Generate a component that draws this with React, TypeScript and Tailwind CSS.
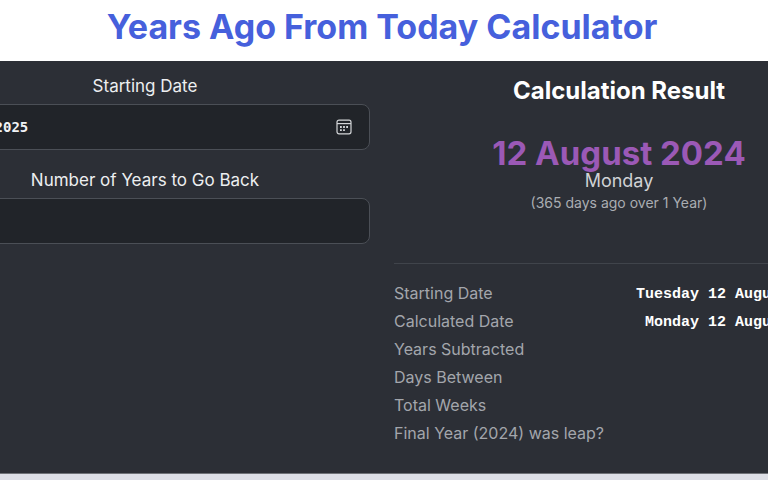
import { useState } from 'react';

type ResultRow = {
  label: string;
  value?: string;
};

const resultRows: ResultRow[] = [
  { label: 'Starting Date', value: 'Tuesday 12 August 2025' },
  { label: 'Calculated Date', value: 'Monday 12 August 2024' },
  { label: 'Years Subtracted' },
  { label: 'Days Between' },
  { label: 'Total Weeks' },
  { label: 'Final Year (2024) was leap?' },
];

const labelClass = 'mb-1 text-center text-[17px] leading-[27px] text-[#eceef0]';

const inputClass =
  'h-[46px] w-full rounded-lg border border-[#4b4f56] bg-[#212429] px-[23px] font-["DejaVu_Sans_Mono",monospace] text-[14px] font-bold text-[#f1f3f5] outline-none focus:border-[#6c727b]';

function CalendarIcon() {
  return (
    <svg className="h-4 w-4" viewBox="0 0 16 16" fill="none" stroke="currentColor" aria-hidden="true">
      <rect x="1" y="1.2" width="14" height="13.6" rx="2" strokeWidth="1.2" />
      <path d="M1 4.6h14" strokeWidth="1.2" />
      <path d="M4 8h1.8M7.1 8h1.8M10.2 8h1.8M4 11.2h1.8M7.1 11.2h1.8" strokeWidth="1.8" />
    </svg>
  );
}

export default function App() {
  const [startDate, setStartDate] = useState('12/08/2025');
  const [years, setYears] = useState('');

  return (
    <div className="min-h-screen overflow-hidden bg-[#dddfe6] font-['Inter',sans-serif]">
      {/* Header */}
      <header className="-ml-20 -mr-19 bg-white pt-1 pb-3">
        <h1 className="text-center text-[34px] leading-[45px] font-bold text-[#4660dc]">
          Years Ago From Today Calculator
        </h1>
      </header>

      <main className="border-b border-[#6f7277] bg-[#2c2f36] pt-3 pb-[26px]">
        <div className="-ml-20 -mr-19 grid grid-cols-2 gap-6">
          {/* Inputs */}
          <form className="flex flex-col" onSubmit={(e) => e.preventDefault()}>
            <label htmlFor="start-date" className={labelClass}>
              Starting Date
            </label>
            <div className="relative mb-[17px]">
              <input
                id="start-date"
                type="text"
                value={startDate}
                onChange={(e) => setStartDate(e.target.value)}
                className={inputClass}
              />
              <button
                type="button"
                aria-label="Open calendar"
                className="absolute inset-y-0 right-0 flex w-[52px] items-center justify-center text-[#d3d5d8]"
              >
                <CalendarIcon />
              </button>
            </div>
            <label htmlFor="years-back" className={labelClass}>
              Number of Years to Go Back
            </label>
            <input
              id="years-back"
              type="text"
              value={years}
              onChange={(e) => setYears(e.target.value)}
              className={inputClass}
            />
          </form>

          {/* Result */}
          <section>
            <h2 className="mb-[26px] text-center text-[24px] leading-9 font-bold text-white">Calculation Result</h2>
            <div className="mb-12 text-center">
              <p className="text-[33px] leading-9 font-bold text-[#9b59b6]">12 August 2024</p>
              <p className="text-[18px] leading-5 text-[#d0d2d5]">Monday</p>
              <p className="text-[14px] leading-6 text-[#aaadb2]">(365 days ago over 1 Year)</p>
            </div>
            <table className="w-full border-t border-[#40444b]">
              <tbody className="before:block before:h-[15px]">
                {resultRows.map((row) => (
                  <tr key={row.label} className="h-7">
                    <th scope="row" className="text-left text-[16px] leading-7 font-normal text-[#a3a6ac]">
                      {row.label}
                    </th>
                    <td className="pt-1 pr-[10px] text-right font-['Liberation_Mono',monospace] text-[15px] leading-6 font-bold text-white">
                      {row.value}
                    </td>
                  </tr>
                ))}
              </tbody>
            </table>
          </section>
        </div>
      </main>
    </div>
  );
}
